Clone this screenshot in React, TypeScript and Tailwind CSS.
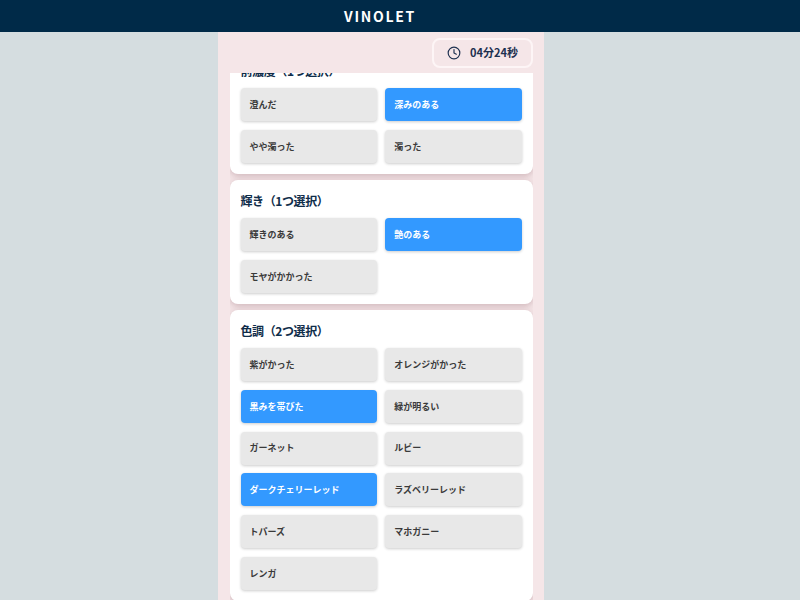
import { Clock } from "lucide-react"

const font = { fontFamily: '"Noto Sans CJK JP", "Noto Sans", sans-serif' }

interface OptionGroup {
  title: string
  options: { label: string; selected?: boolean }[]
  className?: string
}

const groups: OptionGroup[] = [
  {
    title: "前濃度（1つ選択）",
    className: "-mt-[23px]",
    options: [
      { label: "澄んだ" },
      { label: "深みのある", selected: true },
      { label: "やや濁った" },
      { label: "濁った" },
    ],
  },
  {
    title: "輝き（1つ選択）",
    options: [
      { label: "輝きのある" },
      { label: "艶のある", selected: true },
      { label: "モヤがかかった" },
    ],
  },
  {
    title: "色調（2つ選択）",
    options: [
      { label: "紫がかった" },
      { label: "オレンジがかった" },
      { label: "黒みを帯びた", selected: true },
      { label: "緑が明るい" },
      { label: "ガーネット" },
      { label: "ルビー" },
      { label: "ダークチェリーレッド", selected: true },
      { label: "ラズベリーレッド" },
      { label: "トパーズ" },
      { label: "マホガニー" },
      { label: "レンガ" },
    ],
  },
]

function Group({ title, options, className }: OptionGroup) {
  return (
    <section className={`rounded-lg bg-white py-[11px] pr-[11px] pl-[10.5px] shadow-[0_2px_6px_rgba(120,70,80,0.3)] ${className ?? ""}`}>
      <h2 className="mb-[7px] h-[20px] text-[12px] leading-[20px] font-bold tracking-[-0.4px] text-[#0f2d4a]">{title}</h2>
      <div className="grid grid-cols-2 gap-x-[8px] gap-y-[8.6px]">
        {options.map((o) => (
          <button
            key={o.label}
            className={`h-[33.2px] rounded-[4px] px-[9px] text-left text-[9px] font-bold shadow-[0_1px_3px_rgba(0,0,0,0.2)] ${
              o.selected ? "bg-[#3399ff] text-white" : "bg-[#e8e8e8] text-[#3a3a3a]"
            }`}
          >
            {o.label}
          </button>
        ))}
      </div>
    </section>
  )
}

export default function App() {
  return (
    <div className="flex h-[600px] flex-col overflow-hidden bg-[#d5dde0]" style={font}>
      <header className="flex h-[32px] shrink-0 items-center justify-center bg-[#002a48] pr-[40px] text-[14px] font-bold tracking-[1.7px] text-white">
        VINOLET
      </header>
      <div className="flex min-h-0 flex-1 pl-[218px]">
        <main className="flex w-[326px] flex-col bg-[#f5e6e8] pr-[11px] pl-[12px]">
          <div className="flex h-[41px] shrink-0 items-center justify-end">
            <div className="flex h-[30px] w-[101px] items-center justify-center gap-[9px] rounded-lg border-2 border-[#fdf5f6] text-[11px] font-bold text-[#1e3150]">
              <Clock className="h-[14px] w-[14px]" strokeWidth={2} />
              <span>04分24秒</span>
            </div>
          </div>
          <div className="min-h-0 flex-1 overflow-hidden">
            <div className="flex flex-col gap-[6px]">
              {groups.map((g) => (
                <Group key={g.title} {...g} />
              ))}
            </div>
          </div>
        </main>
      </div>
    </div>
  )
}
